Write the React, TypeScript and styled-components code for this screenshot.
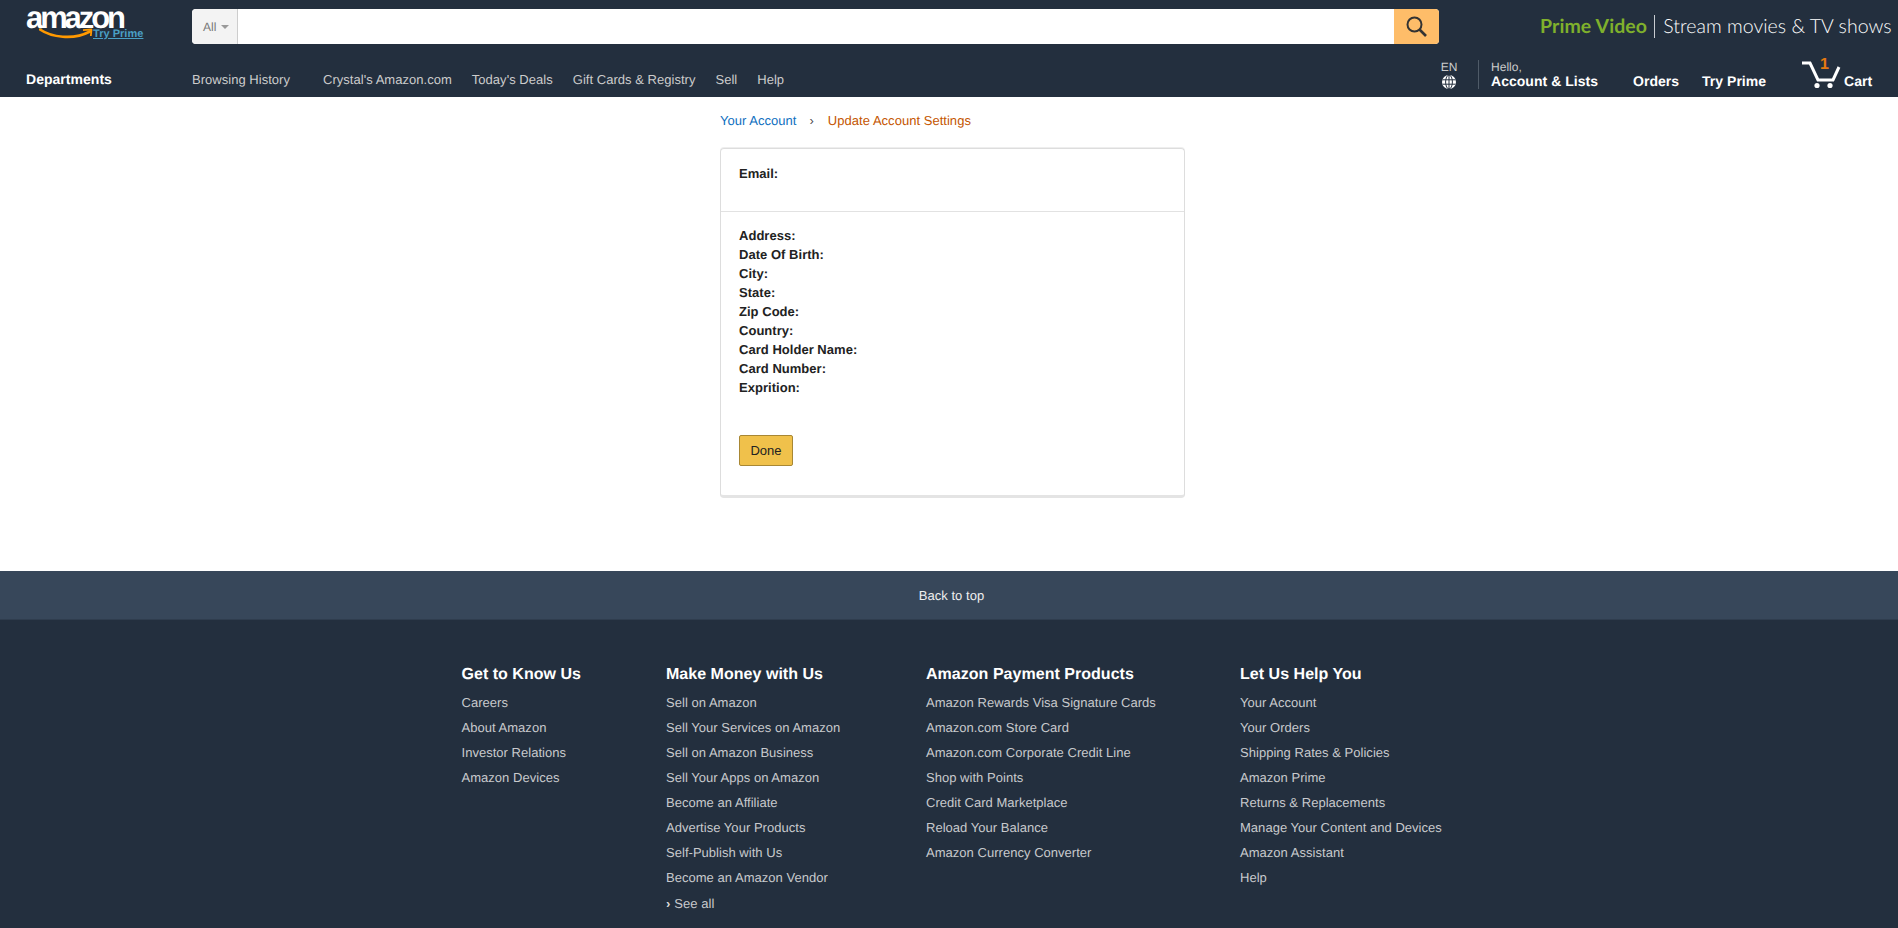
import React from 'react'
import styled, { createGlobalStyle } from 'styled-components'

const GlobalStyle = createGlobalStyle`
  html, body { margin: 0; padding: 0; background: #fff; }
  body {
    font-family: "Liberation Sans", Arial, sans-serif;
    font-size: 13px;
    color: #111;
    text-rendering: geometricPrecision;
    letter-spacing: 0.03px;
  }
  a { text-decoration: none; color: inherit; }
`

const colors = {
  navy: '#232f3e',
  slate: '#37475a',
  link: '#c8cacd',
}

// Header
const Header = styled.header`
  background: ${colors.navy};
  height: 97px;
  display: flex;
  flex-direction: column;
`

const TopRow = styled.div`
  height: 54px;
  display: flex;
  padding-top: 9px;
  box-sizing: border-box;
`

const LogoBox = styled.a`
  position: relative;
  display: block;
  flex: none;
  width: 165px;
  margin-left: 27px;
  height: 35px;
`

const LogoWord = styled.span`
  position: absolute;
  left: -1px;
  top: 0;
  font-size: 31px;
  line-height: 18px;
  font-weight: 700;
  letter-spacing: -3.1px;
  color: #fff;
`

const LogoSmile = styled.svg`
  position: absolute;
  left: 12px;
  top: 19px;
`

const TryPrime = styled.span`
  position: absolute;
  left: 66px;
  top: 19px;
  font-size: 11px;
  line-height: 13px;
  font-weight: 700;
  color: #4a9fc4;
  text-decoration: underline;
`

const SearchBar = styled.form`
  flex: none;
  width: 1247px;
  height: 35px;
  display: flex;
  border-radius: 4px;
  overflow: hidden;
  background: #fff;
  margin: 0;
`

const ScopeSelect = styled.div`
  width: 46px;
  box-sizing: border-box;
  background: #f3f3f3;
  border-right: 1px solid #cdcdcd;
  color: #777;
  font-size: 12px;
  display: flex;
  align-items: center;
  padding-left: 11px;
  gap: 5px;
`

const Caret = styled.i`
  width: 0;
  height: 0;
  border-left: 4px solid transparent;
  border-right: 4px solid transparent;
  border-top: 4px solid #999;
`

const SearchInput = styled.input`
  flex: 1;
  border: 0;
  outline: 0;
  min-width: 0;
`

const SearchButton = styled.button`
  width: 45px;
  border: 0;
  padding: 0;
  background: #febd69;
  display: flex;
  align-items: center;
  justify-content: center;
`

const Promo = styled.div`
  flex: none;
  margin-left: 101px;
  height: 35px;
  display: flex;
  align-items: center;
  font-family: "Lato", sans-serif;
  font-size: 19.5px;
  white-space: nowrap;
`

const PromoGreen = styled.span`
  color: #7fb02c;
  font-weight: 700;
  letter-spacing: 0.1px;
`

const PromoDivider = styled.span`
  width: 1px;
  height: 23px;
  background: #c8ccd1;
  margin: 0 8px 0 7px;
`

const PromoText = styled.span`
  color: #fff;
  font-weight: 300;
`

const NavRow = styled.nav`
  height: 43px;
  display: flex;
  align-items: flex-start;
`

const Departments = styled.a`
  flex: none;
  width: 166px;
  margin-left: 26px;
  margin-top: 17px;
  color: #fff;
  font-size: 14px;
  font-weight: 700;
  line-height: 16px;
`

const NavLinks = styled.div`
  display: flex;
  margin-top: 18px;
`

const NavLink = styled.a<{ $gap: number }>`
  color: #ccc;
  font-size: 13px;
  line-height: 16px;
  margin-right: ${({ $gap }) => $gap}px;
`

const NavRight = styled.div`
  margin-left: auto;
  display: flex;
  align-items: flex-start;
`

const Lang = styled.div`
  width: 16px;
  margin-top: 6px;
  color: #ccc;
  font-size: 12px;
  line-height: 14px;
  display: flex;
  flex-direction: column;
  align-items: center;
  gap: 1px;
`

const AccountBlock = styled.div`
  margin-left: 21px;
  margin-top: 6px;
  height: 29px;
  box-sizing: border-box;
  padding-left: 12px;
  border-left: 1px solid #4f5b68;
  width: 155px;
`

const Hello = styled.div`
  color: #ccc;
  font-size: 12px;
  line-height: 12px;
  margin-top: 1px;
`

const BoldNav = styled.div<{ $width?: number }>`
  color: #fff;
  font-size: 14px;
  font-weight: 700;
  line-height: 16px;
  ${({ $width }) => ($width ? `width: ${$width}px; margin-top: 19px;` : '')}
`

const CartBlock = styled.div`
  position: relative;
  width: 70px;
  margin-right: 26px;
  height: 43px;
`

const CartIcon = styled.svg`
  position: absolute;
  left: 0;
  top: 6px;
`

const CartCount = styled.span`
  position: absolute;
  left: 18px;
  top: 2px;
  color: #e47911;
  font-size: 16px;
  font-weight: 700;
  line-height: 18px;
`

const CartLabel = styled.span`
  position: absolute;
  left: 42px;
  top: 19px;
  color: #fff;
  font-size: 14px;
  font-weight: 700;
  line-height: 16px;
`

// Main
const Main = styled.main`
  height: 474px;
  padding-left: 720px;
  box-sizing: border-box;
`

const Breadcrumb = styled.div`
  display: flex;
  height: 51px;
  align-items: flex-start;
  padding-top: 16px;
  box-sizing: border-box;
  line-height: 15px;
`

const CrumbLink = styled.a`
  color: #0f6fc0;
`

const CrumbSeparator = styled.span`
  color: #444;
  margin: 0 14px 0 13px;
`

const CrumbCurrent = styled.span`
  color: #c45500;
`

const Card = styled.section`
  width: 465px;
  height: 350px;
  box-sizing: border-box;
  border: 1px solid #ddd;
  border-bottom: 3px solid #e4e4e4;
  border-radius: 4px;
  box-shadow: 0 -1px 0 #eee;
`

const EmailSection = styled.div`
  height: 63px;
  box-sizing: border-box;
  padding: 15px 18px 0;
  border-bottom: 1px solid #e2e2e2;
`

const Label = styled.div`
  font-weight: 700;
  line-height: 19px;
  color: #222;
`

const DetailSection = styled.div`
  padding: 14px 18px 0;
`

const DoneButton = styled.button`
  display: block;
  margin-top: 38px;
  width: 54px;
  height: 31px;
  padding: 0;
  font-family: inherit;
  font-size: 13px;
  color: #222;
  background: #f0c14b;
  border: 1px solid #a88734;
  border-radius: 2px;
`

// Footer
const BackToTop = styled.a`
  display: flex;
  align-items: center;
  justify-content: center;
  height: 49px;
  padding-left: 5px;
  background: ${colors.slate};
  color: #f0f0f0;
  font-size: 13px;
  border-bottom: 1px solid #2f3d4e;
  box-sizing: border-box;
`

const Footer = styled.footer`
  background: ${colors.navy};
  height: 308px;
  overflow: hidden;
  padding: 45px 0 0 461.5px;
  box-sizing: border-box;
  display: flex;
`

const FooterColumn = styled.div<{ $width: number }>`
  width: ${({ $width }) => $width}px;
  flex: none;
`

const FooterHeading = styled.h3`
  margin: 0 0 11px;
  color: #fff;
  font-size: 16px;
  font-weight: 700;
  line-height: 19px;
`

const FooterLink = styled.a`
  display: block;
  color: ${colors.link};
  font-size: 13px;
  line-height: 15px;
  margin-bottom: 10px;
`

const SeeAll = styled(FooterLink)`
  margin-top: 11px;
`

const Chevron = styled.b`
  color: #ddd;
  margin-right: 4px;
`

const footerColumns = [
  {
    title: 'Get to Know Us',
    width: 204.5,
    links: ['Careers', 'About Amazon', 'Investor Relations', 'Amazon Devices'],
  },
  {
    title: 'Make Money with Us',
    width: 260,
    links: [
      'Sell on Amazon',
      'Sell Your Services on Amazon',
      'Sell on Amazon Business',
      'Sell Your Apps on Amazon',
      'Become an Affiliate',
      'Advertise Your Products',
      'Self-Publish with Us',
      'Become an Amazon Vendor',
    ],
    seeAll: true,
  },
  {
    title: 'Amazon Payment Products',
    width: 314,
    links: [
      'Amazon Rewards Visa Signature Cards',
      'Amazon.com Store Card',
      'Amazon.com Corporate Credit Line',
      'Shop with Points',
      'Credit Card Marketplace',
      'Reload Your Balance',
      'Amazon Currency Converter',
    ],
  },
  {
    title: 'Let Us Help You',
    width: 300,
    links: [
      'Your Account',
      'Your Orders',
      'Shipping Rates & Policies',
      'Amazon Prime',
      'Returns & Replacements',
      'Manage Your Content and Devices',
      'Amazon Assistant',
      'Help',
    ],
  },
]

const navLinks = [
  { label: 'Browsing History', gap: 33 },
  { label: "Crystal's Amazon.com", gap: 20 },
  { label: "Today's Deals", gap: 20 },
  { label: 'Gift Cards & Registry', gap: 20 },
  { label: 'Sell', gap: 20 },
  { label: 'Help', gap: 0 },
]

const detailLabels = [
  'Address:',
  'Date Of Birth:',
  'City:',
  'State:',
  'Zip Code:',
  'Country:',
  'Card Holder Name:',
  'Card Number:',
  'Exprition:',
]

export default function App() {
  return (
    <>
      <GlobalStyle />
      <Header>
        <TopRow>
          <LogoBox href="#">
            <LogoWord>amazon</LogoWord>
            <LogoSmile width="56" height="16" viewBox="0 0 56 16" fill="none">
              <path d="M1 1.5C12 9 34 12.5 51 3.5" stroke="#f90" strokeWidth="2.6" strokeLinecap="round" />
              <path d="M44 2.2L52.5 1.5L51.8 8" stroke="#f90" strokeWidth="1.8" strokeLinejoin="round" />
            </LogoSmile>
            <TryPrime>Try Prime</TryPrime>
          </LogoBox>
          <SearchBar>
            <ScopeSelect>
              All
              <Caret />
            </ScopeSelect>
            <SearchInput />
            <SearchButton type="button" aria-label="Go">
              <svg width="21" height="21" viewBox="0 0 21 21" fill="none" stroke="#333" strokeWidth="2">
                <circle cx="8.5" cy="8.5" r="7" />
                <path d="M13.5 13.5L20 20" strokeWidth="2.6" />
              </svg>
            </SearchButton>
          </SearchBar>
          <Promo>
            <PromoGreen>Prime Video</PromoGreen>
            <PromoDivider />
            <PromoText>Stream movies &amp; TV shows</PromoText>
          </Promo>
        </TopRow>
        <NavRow>
          <Departments href="#">Departments</Departments>
          <NavLinks>
            {navLinks.map((link) => (
              <NavLink key={link.label} href="#" $gap={link.gap}>
                {link.label}
              </NavLink>
            ))}
          </NavLinks>
          <NavRight>
            <Lang>
              EN
              <svg width="14" height="14" viewBox="0 0 14 14" fill="none">
                <circle cx="7" cy="7" r="7" fill="#fff" />
                <path d="M0.5 4.8H13.5M0.5 9.2H13.5M7 0V14" stroke={colors.navy} strokeWidth="1" />
                <ellipse cx="7" cy="7" rx="3.4" ry="7" stroke={colors.navy} strokeWidth="1" />
              </svg>
            </Lang>
            <AccountBlock>
              <Hello>Hello,</Hello>
              <BoldNav>Account &amp; Lists</BoldNav>
            </AccountBlock>
            <BoldNav $width={69}>Orders</BoldNav>
            <BoldNav $width={100}>Try Prime</BoldNav>
            <CartBlock>
              <CartIcon width="40" height="29" viewBox="0 0 40 29" fill="none">
                <path d="M0 3H8L16 20H31L37 7" stroke="#fff" strokeWidth="3" />
                <circle cx="15" cy="25.5" r="2.6" fill="#fff" />
                <circle cx="28" cy="25.5" r="2.6" fill="#fff" />
              </CartIcon>
              <CartCount>1</CartCount>
              <CartLabel>Cart</CartLabel>
            </CartBlock>
          </NavRight>
        </NavRow>
      </Header>
      <Main>
        <Breadcrumb>
          <CrumbLink href="#">Your Account</CrumbLink>
          <CrumbSeparator>›</CrumbSeparator>
          <CrumbCurrent>Update Account Settings</CrumbCurrent>
        </Breadcrumb>
        <Card>
          <EmailSection>
            <Label>Email:</Label>
          </EmailSection>
          <DetailSection>
            {detailLabels.map((label) => (
              <Label key={label}>{label}</Label>
            ))}
            <DoneButton type="button">Done</DoneButton>
          </DetailSection>
        </Card>
      </Main>
      <BackToTop href="#">Back to top</BackToTop>
      <Footer>
        {footerColumns.map((column) => (
          <FooterColumn key={column.title} $width={column.width}>
            <FooterHeading>{column.title}</FooterHeading>
            {column.links.map((link) => (
              <FooterLink key={link} href="#">
                {link}
              </FooterLink>
            ))}
            {column.seeAll && (
              <SeeAll href="#">
                <Chevron>›</Chevron>See all
              </SeeAll>
            )}
          </FooterColumn>
        ))}
      </Footer>
    </>
  )
}
